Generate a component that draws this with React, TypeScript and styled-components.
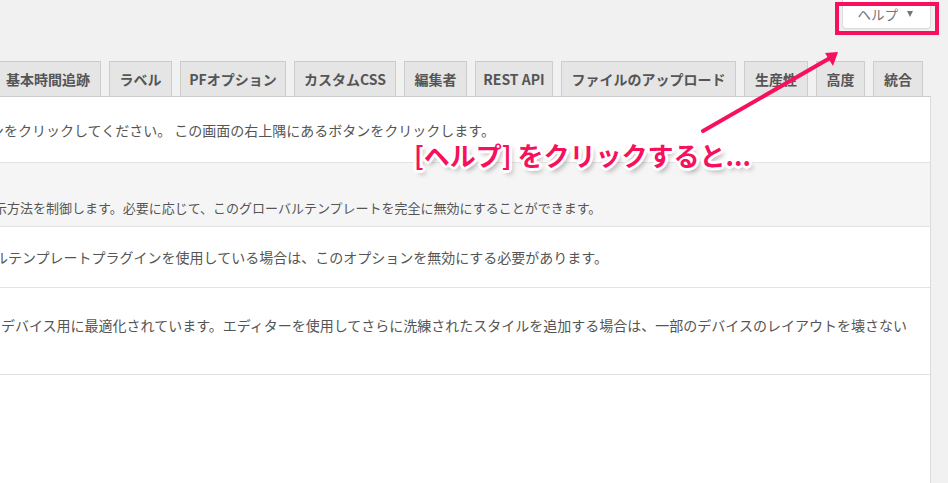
import React from "react";
import styled, { createGlobalStyle } from "styled-components";

const PINK = "#f7105c";

const GlobalStyle = createGlobalStyle`
  html, body { margin: 0; padding: 0; background: #f1f1f1; }
  body { font-family: "Noto Sans CJK JP", "Noto Sans", sans-serif; color: #555; }
`;

const Page = styled.div`
  position: relative;
  width: 948px;
  height: 483px;
  overflow: hidden;
  background: #f1f1f1;
  display: flex;
  flex-direction: column;
`;

const Header = styled.div`
  height: 61px;
  display: flex;
  justify-content: flex-end;
  align-items: flex-start;
  padding-right: 17px;
  flex: none;
`;

const HelpButton = styled.button`
  height: 29px;
  box-sizing: border-box;
  background: #fff;
  border: 1px solid #dcdcdc;
  border-top: none;
  border-radius: 0 0 4px 4px;
  box-shadow: 0 1px 1px rgba(0, 0, 0, 0.04);
  padding: 0 17px 1px 15px;
  display: flex;
  align-items: center;
  gap: 9px;
  font-family: "Noto Sans CJK JP", sans-serif;
  font-size: 13.5px;
  color: #72777c;
  cursor: pointer;
`;

const Caret = styled.span`
  width: 0;
  height: 0;
  border-left: 3.5px solid transparent;
  border-right: 3.5px solid transparent;
  border-top: 6px solid #72777c;
  margin-top: 1px;
`;

const TabBar = styled.div`
  display: flex;
  gap: 8px;
  margin-left: -5px;
  height: 35px;
  flex: none;
`;

const Tab = styled.div<{ $w: number }>`
  box-sizing: border-box;
  width: ${(p) => p.$w}px;
  height: 35px;
  background: #e5e5e5;
  border: 1px solid #ccc;
  border-bottom: none;
  display: flex;
  align-items: center;
  justify-content: center;
  font-size: 14px;
  font-weight: 700;
  color: #555;
  white-space: nowrap;
`;

const Panel = styled.div`
  width: 931px;
  box-sizing: border-box;
  flex: 1;
  background: #fff;
  border-top: 1px solid #ccc;
  border-right: 1px solid #dcdcdc;
  overflow: hidden;
`;

const Row = styled.div<{ $h: number; $top: number; $alt?: boolean; $shift: number; $size: number }>`
  box-sizing: border-box;
  height: ${(p) => p.$h}px;
  padding-top: ${(p) => p.$top}px;
  text-indent: ${(p) => p.$shift}px;
  background: ${(p) => (p.$alt ? "#f5f5f5" : "#fff")};
  border-bottom: 1px solid #e3e3e3;
  font-size: ${(p) => p.$size}px;
  line-height: 20px;
  color: #555;
  white-space: nowrap;
  overflow: hidden;
`;

const Highlight = styled.div`
  position: absolute;
  left: 835px;
  top: 2px;
  width: 104px;
  height: 33px;
  box-sizing: border-box;
  border: 4px solid ${PINK};
`;

const ArrowSvg = styled.svg`
  position: absolute;
  left: 0;
  top: 0;
  pointer-events: none;
`;

const Callout = styled.div`
  position: absolute;
  left: 414px;
  top: 139px;
  font-family: "Noto Sans CJK JP", sans-serif;
  font-size: 26px;
  font-weight: 700;
  line-height: 32px;
  color: ${PINK};
  white-space: nowrap;
  text-shadow:
    2px 0 0 #fff, -2px 0 0 #fff, 0 2px 0 #fff, 0 -2px 0 #fff,
    2px 2px 0 #fff, -2px 2px 0 #fff, 2px -2px 0 #fff, -2px -2px 0 #fff,
    3px 0 0 #fff, -3px 0 0 #fff, 0 3px 0 #fff, 0 -3px 0 #fff,
    3px 4px 5px rgba(0, 0, 0, 0.35);
`;

const tabs: [string, number][] = [
  ["基本時間追跡", 106],
  ["ラベル", 63],
  ["PFオプション", 106],
  ["カスタムCSS", 102],
  ["編集者", 63],
  ["REST API", 78],
  ["ファイルのアップロード", 175],
  ["生産性", 64],
  ["高度", 49],
  ["統合", 50],
];

export default function App() {
  return (
    <>
      <GlobalStyle />
      <Page>
        <Header>
          <HelpButton>
            ヘルプ
            <Caret />
          </HelpButton>
        </Header>
        <TabBar>
          {tabs.map(([label, w]) => (
            <Tab key={label} $w={w}>
              {label}
            </Tab>
          ))}
        </TabBar>
        <Panel>
          <Row $h={66} $top={23} $shift={-10} $size={14}>
            ンをクリックしてください。 この画面の右上隅にあるボタンをクリックします。
          </Row>
          <Row $h={64} $top={35} $shift={-6} $size={13} $alt>
            示方法を制御します。必要に応じて、このグローバルテンプレートを完全に無効にすることができます。
          </Row>
          <Row $h={61} $top={20} $shift={-6} $size={14}>
            ルテンプレートプラグインを使用している場合は、このオプションを無効にする必要があります。
          </Row>
          <Row $h={87} $top={27} $shift={1} $size={14}>
            デバイス用に最適化されています。エディターを使用してさらに洗練されたスタイルを追加する場合は、一部のデバイスのレイアウトを壊さない
          </Row>
        </Panel>
        <Highlight />
        <ArrowSvg width="948" height="483" viewBox="0 0 948 483">
          <line x1="703" y1="131" x2="830" y2="58" stroke={PINK} strokeWidth="4" strokeLinecap="round" />
          <polygon points="838,52 825,53 833,66" fill={PINK} />
        </ArrowSvg>
        <Callout>[ヘルプ] をクリックすると...</Callout>
      </Page>
    </>
  );
}
